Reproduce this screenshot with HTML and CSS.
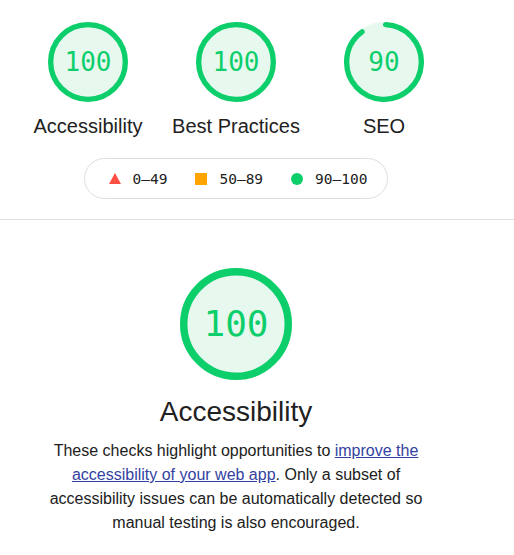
FILE: index.html
```html
<!DOCTYPE html>
<html lang="en">
<head>
<meta charset="utf-8">
<title>Lighthouse report</title>
<link rel="stylesheet" href="styles.css">
</head>
<body>
<div class="page">
  <header class="summary">
    <div class="gauges">
      <a class="gauge-wrap">
        <div class="gauge">
          <svg viewBox="0 0 120 120" class="gauge-svg">
            <circle class="gauge-base" r="56" cx="60" cy="60"></circle>
            <circle class="gauge-arc" r="56" cx="60" cy="60" stroke-dasharray="351.86 351.86"></circle>
          </svg>
          <div class="gauge-pct">100</div>
        </div>
        <div class="gauge-label">Accessibility</div>
      </a>
      <a class="gauge-wrap">
        <div class="gauge">
          <svg viewBox="0 0 120 120" class="gauge-svg">
            <circle class="gauge-base" r="56" cx="60" cy="60"></circle>
            <circle class="gauge-arc" r="56" cx="60" cy="60" stroke-dasharray="351.86 351.86"></circle>
          </svg>
          <div class="gauge-pct">100</div>
        </div>
        <div class="gauge-label">Best Practices</div>
      </a>
      <a class="gauge-wrap">
        <div class="gauge">
          <svg viewBox="0 0 120 120" class="gauge-svg">
            <circle class="gauge-base" r="56" cx="60" cy="60"></circle>
            <circle class="gauge-arc gauge-arc-round" r="56" cx="60" cy="60" stroke-dasharray="313.7 351.86" transform="rotate(-87.5 60 60)"></circle>
          </svg>
          <div class="gauge-pct">90</div>
        </div>
        <div class="gauge-label">SEO</div>
      </a>
    </div>
    <div class="scale">
      <span class="range"><span class="icon icon-fail"></span>0–49</span>
      <span class="range"><span class="icon icon-average"></span>50–89</span>
      <span class="range"><span class="icon icon-pass"></span>90–100</span>
    </div>
  </header>
  <hr class="divider">
  <section class="category">
    <div class="gauge gauge-big">
      <svg viewBox="0 0 120 120" class="gauge-svg">
        <circle class="gauge-base" r="56" cx="60" cy="60"></circle>
        <circle class="gauge-arc" r="56" cx="60" cy="60" stroke-dasharray="351.86 351.86"></circle>
      </svg>
      <div class="gauge-pct">100</div>
    </div>
    <h2 class="category-title">Accessibility</h2>
    <p class="category-desc">These checks highlight opportunities to <a href="#" class="link">improve the accessibility of your web app</a>. Only a subset of accessibility issues can be automatically detected so manual testing is also encouraged.</p>
  </section>
</div>
</body>
</html>
```
FILE: styles.css
```css
html, body {
  margin: 0;
  padding: 0;
  background: #ffffff;
}
body {
  font-family: "Liberation Sans", Arial, sans-serif;
  color: #212121;
  width: 514px;
  overflow: hidden;
}
.summary {
  width: 472px;
  padding-top: 22px;
  padding-bottom: 20px;
}
.gauges {
  display: flex;
  justify-content: center;
}
.gauge-wrap {
  width: 148px;
  display: flex;
  flex-direction: column;
  align-items: center;
  color: #212121;
}
.gauge {
  display: grid;
  width: 80px;
  height: 80px;
}
.gauge > * {
  grid-area: 1 / 1;
}
.gauge-svg {
  width: 100%;
  height: 100%;
  display: block;
}
.gauge-base {
  fill: #e7f9ef;
  stroke: #e7f9ef;
  stroke-width: 8;
}
.gauge-arc {
  fill: none;
  stroke: #0cce6b;
  stroke-width: 8;
}
.gauge-arc-round {
  stroke-linecap: round;
}
.gauge-pct {
  display: flex;
  align-items: center;
  justify-content: center;
  font-family: "DejaVu Sans Mono", monospace;
  font-size: 26px;
  color: #0cce6b;
  line-height: 1;
}
.gauge-label {
  margin-top: 11px;
  font-size: 20px;
  line-height: 26px;
  white-space: nowrap;
}
.scale {
  margin: 19px auto 0;
  width: max-content;
  box-sizing: border-box;
  height: 41px;
  border: 1px solid #dedede;
  border-radius: 21px;
  padding: 0 20px 0 24px;
  display: flex;
  align-items: center;
  gap: 28px;
  font-family: "DejaVu Sans Mono", monospace;
  font-size: 14.5px;
  color: #212121;
}
.range {
  display: flex;
  align-items: center;
}
.icon {
  width: 12px;
  height: 12px;
  margin-right: 12px;
  display: inline-block;
}
.icon-fail {
  width: 0;
  height: 0;
  border-left: 6px solid transparent;
  border-right: 6px solid transparent;
  border-bottom: 11px solid #ff4e42;
}
.icon-average {
  background: #ffa400;
}
.icon-pass {
  background: #0cce6b;
  border-radius: 50%;
}
.divider {
  margin: 0;
  border: 0;
  height: 1px;
  width: 514px;
  background: #e0e0e0;
}
.category {
  width: 472px;
  padding-top: 48px;
  display: flex;
  flex-direction: column;
  align-items: center;
}
.gauge-big {
  width: 112px;
  height: 112px;
}
.gauge-big .gauge-pct {
  font-size: 36px;
}
.category-title {
  margin: 14px 0 0;
  font-size: 28px;
  line-height: 36px;
  font-weight: normal;
}
.category-desc {
  margin: 9px 0 0;
  max-width: 400px;
  text-align: center;
  font-size: 16px;
  line-height: 24px;
}
.link {
  color: #3342a2;
  text-decoration: underline;
}
```
